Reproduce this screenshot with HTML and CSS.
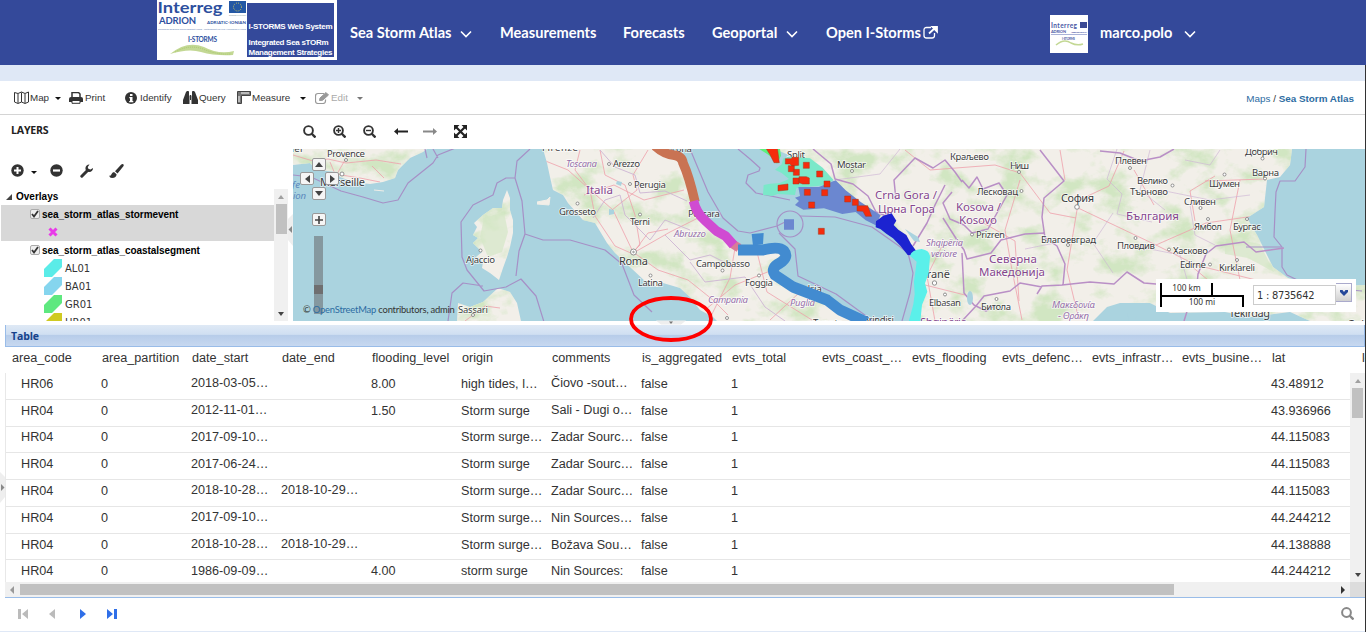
FILE: index.html
```html
<!DOCTYPE html>
<html lang="en">
<head>
<meta charset="utf-8">
<title>Sea Storm Atlas</title>
<link rel="stylesheet" href="styles.css">
</head>
<body>
<header class="topbar">
  <svg class="logo" width="180" height="60" viewBox="0 0 180 60">
    <rect width="180" height="60" fill="#fff"/>
    <rect x="90" y="3" width="87" height="54" fill="#34499a"/>
    <rect x="72" y="1" width="17" height="12" fill="#2458a4"/>
    <circle cx="80.500" cy="7" r="4" fill="none" stroke="#c9c25a" stroke-width="1" stroke-dasharray="1 1.100"/>
    <g fill="#2d4f9e" font-family="Lato, sans-serif">
      <text x="0.500" y="13" font-size="15.500" font-weight="700" textLength="65" lengthAdjust="spacingAndGlyphs">Interreg</text>
      <text x="2" y="24" font-size="9.500" textLength="37">ADRION</text>
      <text x="50" y="24" font-size="4.500" textLength="39">ADRIATIC-IONIAN</text>
      <text x="72" y="15.500" font-size="2" fill="#9aa" textLength="17">EUROPEAN UNION</text>
      <text x="1" y="30" font-size="2.600" fill="#8a9cc4" textLength="88">European Regional Development Fund - Instrument for Pre-Accession II Fund</text>
      <text x="31" y="41.500" font-size="6.500" textLength="29">I-STORMS</text>
    </g>
    <path d="M13 54q17-14 34-7q15 8 30 4l-1 4q-18 1-32-3q-12-4-31 2z" fill="#c3d894"/>
    <path d="M18 52q14-8 28-3q14 6 28 5" fill="none" stroke="#a9c86c" stroke-dasharray="1 1"/>
    <g fill="#fff" font-family="Liberation Sans, sans-serif" font-weight="700" font-size="8">
      <text x="91.500" y="29" textLength="84">I-STORMS Web System</text>
      <text x="91.500" y="44.500" textLength="80">Integrated Sea sTORm</text>
      <text x="91.500" y="54.500" textLength="84">Management Strategies</text>
    </g>
  </svg>
  <nav class="menu">
    <a class="m1">Sea Storm Atlas <svg width="12" height="8"><path d="M1 1.500l5 5 5-5" class="chev"/></svg></a>
    <a class="m2">Measurements</a>
    <a class="m3">Forecasts</a>
    <a class="m4">Geoportal <svg width="12" height="8"><path d="M1 1.500l5 5 5-5" class="chev"/></svg></a>
    <a class="m5">Open I-Storms<svg class="ext" width="15" height="13"><path d="M8 1.500H3.500q-2.500 0-2.500 2.500v5.500q0 2.500 2.500 2.500H9q2.500 0 2.500-2.500V7" fill="none" stroke="#fff" stroke-width="1.300"/><path d="M6 7.500L12.500 1.500M9.500 1H14v4.500z" stroke="#fff" stroke-width="1.800" fill="#fff"/></svg></a>
  </nav>
  <div class="user">
    <svg width="38" height="38"><rect width="38" height="38" fill="#fff"/><g fill="#4a57a4" font-family="Lato, sans-serif"><text x="1" y="13" font-size="6.500" font-weight="700" textLength="26">Interreg</text><text x="1" y="17.500" font-size="4" textLength="15">ADRION</text><text x="21" y="17.500" font-size="2.500" textLength="16">ADRIATIC-IONIAN</text><text x="12" y="25" font-size="3" textLength="13">I-STORMS</text></g><rect x="30" y="7" width="7" height="6" fill="#3b4a94"/><path d="M1 19.500h36" stroke="#aab3d8"/><path d="M6 30q8-7 15-2q6 3 12 1" fill="none" stroke="#c3d894" stroke-width="1.500"/></svg>
    <span class="name">marco.polo</span>
    <svg width="12" height="8"><path d="M1 1.500l5 5 5-5" class="chev"/></svg>
  </div>
</header>
<div class="app">
<div class="band"></div>
<div class="tools">
  <span class="t1"><svg width="15" height="13" fill="none" stroke="#333"><path d="M.500 1.500l3.500 1 3.500-1.500 3.500 1.500 3.500-1.500v10l-3.500 1.500-3.500-1.500-3.500 1.500-3.500-1.500zM4 3v9M7.500 1.500v9.500M11 3v9"/></svg><b>Map</b><i class="dn"></i></span>
  <span class="t2"><svg width="14" height="12"><path d="M3 5V.500h6.500L11 2v3" fill="#fff" stroke="#333" stroke-width="1.500"/><path d="M2 5h10q2 0 2 2v3H0V7q0-2 2-2z" fill="#333"/><path d="M3 8.500h8v2.800H3z" fill="#fff" stroke="#333"/></svg><b>Print</b></span>
  <span class="t3"><svg width="12" height="12"><circle cx="6" cy="6" r="6" fill="#333"/><path d="M5 2h2.500v2H5zM4.300 5h3.200v4h.8v1.300H4.200V9H5V6.300h-.7z" fill="#fff"/></svg><b>Identify</b></span>
  <span class="t4"><svg width="15" height="13" fill="#333"><path d="M3 1h3v3l.500 1v8H0V9zM9 1h3l3 8v4H8.500V5L9 4zM7 4h1v5H7zM3.500 0h2.300v1H3.500zM9.200 0h2.300v1H9.200z"/></svg><b>Query</b></span>
  <span class="t5"><svg width="14" height="13"><path d="M.500.500h13v4H4.500v8h-4z" fill="#777" stroke="#444"/><path d="M5 1v2M7 1v2M9 1v2M11 1v2M1 6h2M1 8h2M1 10h2" stroke="#fff"/></svg><b>Measure</b><i class="dn"></i></span>
  <span class="t6"><svg width="14" height="12" fill="none" stroke="#999"><path d="M9 1.500H3q-2.500 0-2.500 2.500v5Q.500 11.500 3 11.500h5q2.500 0 2.500-2.500V7.500" stroke-width="1.200"/><path d="M4.500 8.500L5 6l6-5.500L13.500 3 7.500 8.300z" fill="#999"/></svg><b>Edit</b><i class="dn"></i></span>
  <span class="crumbs"><a>Maps</a> / <a class="cur">Sea Storm Atlas</a></span>
</div>
<main class="work">
  <aside class="layers">
    <h2>LAYERS</h2>
    <div class="ltools">
      <svg width="13" height="13"><circle cx="6.500" cy="6.500" r="6.200" fill="#333"/><path d="M6.500 3v7M3 6.500h7" stroke="#fff" stroke-width="2"/></svg>
      <i class="dn"></i>
      <svg class="minus" width="13" height="13"><circle cx="6.500" cy="6.500" r="6.200" fill="#333"/><path d="M3 6.500h7" stroke="#fff" stroke-width="2.200"/></svg>
      <svg class="wrench" width="14" height="14"><path d="M1.800 12.200L8 6" stroke="#333" stroke-width="3" stroke-linecap="round"/><path d="M13 4a3.800 3.800 0 1 1-3.500-3.500L7.800 3l.4 2 2.300.5z" fill="#333"/></svg>
      <svg class="brush" width="15" height="14"><path d="M14.300.300q1 1-.3 2.500L8.500 9.500 6 7.300 12 .800q1.400-1.200 2.300-.5zM5 8l2.600 2.300Q7.500 14 3 14 .800 14 0 11.500q1.600.7 2.300-1Q3.200 8 5 8z" fill="#333"/></svg>
    </div>
    <div class="treewrap">
      <div class="tree">
        <div class="node root"><svg width="6" height="6"><path d="M6 0v6H0z" fill="#444"/></svg>Overlays</div>
        <div class="sel">
          <div class="node leaf"><span class="cb"><svg width="8" height="8"><path d="M1 4l2 2.500L7 1" class="tick"/></svg></span>sea_storm_atlas_stormevent</div>
          <div class="symbol"><svg width="10" height="10"><path d="M1.500 1.500l7 7M8.500 1.500l-7 7" stroke="#e83be8" stroke-width="3"/></svg></div>
        </div>
        <div class="node leaf"><span class="cb"><svg width="8" height="8"><path d="M1 4l2 2.500L7 1" class="tick"/></svg></span>sea_storm_atlas_coastalsegment</div>
        <div class="leg"><svg width="18" height="18"><path d="M0 18V10L10 0h8v8L8 18z" fill="#5bece8"/></svg>AL01</div>
        <div class="leg"><svg width="18" height="18"><path d="M0 18V10L10 0h8v8L8 18z" fill="#85d5ee"/></svg>BA01</div>
        <div class="leg"><svg width="18" height="18"><path d="M0 18V10L10 0h8v8L8 18z" fill="#5ee87f"/></svg>GR01</div>
        <div class="leg"><svg width="18" height="18"><path d="M0 18V10L10 0h8v8L8 18z" fill="#cfca22"/></svg>HR01</div>
      </div>
      <div class="vs"><i class="up"></i><div class="thumb"></div><i class="down"></i></div>
    </div>
  </aside>
  <div class="split"><svg width="5" height="32"><path d="M5 0L0 5v21l5 6z" fill="#eee"/><path d="M4 12v7L.500 15.500z" fill="#888"/></svg></div>
  <section class="mapcol">
    <div class="mtools">
      <svg width="13" height="13"><circle cx="5.500" cy="5.500" r="4.400" class="lens"/><path d="M8.500 8.500l4 4" class="hnd"/></svg>
      <svg width="13" height="13"><circle cx="5.500" cy="5.500" r="4.400" class="lens"/><path d="M8.500 8.500l4 4" class="hnd"/><path d="M5.500 3v5M3 5.500h5" stroke="#333" stroke-width="1.400"/></svg>
      <svg width="13" height="13"><circle cx="5.500" cy="5.500" r="4.400" class="lens"/><path d="M8.500 8.500l4 4" class="hnd"/><path d="M3 5.500h5" stroke="#333" stroke-width="1.400"/></svg>
      <svg width="14" height="9"><path d="M2 4.500h12" stroke="#222" stroke-width="2"/><path d="M4 1v7L0 4.500z" fill="#222"/></svg>
      <svg width="14" height="9"><path d="M0 4.500h12" stroke="#888" stroke-width="2"/><path d="M10 1v7l4-3.500z" fill="#888"/></svg>
      <svg width="13" height="13"><path d="M2 2l9 9M11 2l-9 9" stroke="#222" stroke-width="2.200"/><path d="M0 0h5.500L0 5.500zM13 0v5.500L7.500 0zM0 13V7.500L5.500 13zM13 13H7.500L13 7.500z" fill="#222"/></svg>
    </div>
    <div class="map">
      <svg class="canvas" width="1072" height="172" viewBox="293 149 1072 172">
        <defs>
          <filter id="woods" x="0" y="0" width="100%" height="100%" color-interpolation-filters="sRGB"><feTurbulence type="fractalNoise" baseFrequency=".03 .04" numOctaves="5" seed="5"/><feColorMatrix values="0 0 0 0 .82  0 0 0 0 .9  0 0 0 0 .76  4 0 0 0 -1.950"/></filter>
          <clipPath id="land"><path d="M293 149H427L423 152 410 158 398 170 395 178 383 182 370 184 353 182 340 177 337 172 317 170 310 163 293 165zM507 190L510 198V210L513 220V233L510 247 507 257 503 268 499 280 490 273 482 268 483 262 476 257 482 252 473 243 478 238 473 235 477 227 474 223 483 215 493 208 502 208 503 200zM457 321L458 303 470 307 483 302 498 288 510 292 517 303 521 321zM543 149L547 163 550 177 553 190 563 195 568 203 583 220 595 223 607 243 615 253 630 267 647 283 657 287 663 283 680 288 690 297 700 310 713 317 717 321H863L840 310 827 300 793 287 775 275 773 268 787 258 780 248 757 250 735 246 713 228 700 215 694 202 683 165 673 152 660 149zM775 149L800 160 833 180 860 203 877 220 897 230 910 253 920 253 917 273 920 293 913 321H1093L1107 307 1120 303 1150 303 1170 313 1225 312 1250 317 1290 312 1310 321H1365V285L1323 287 1288 278 1273 267 1257 235 1247 218 1264 207 1267 180 1280 177 1290 165 1292 149z"/></clipPath>
        </defs>
        <rect x="293" y="149" width="1072" height="172" fill="#aad3df"/>
        <g clip-path="url(#land)">
          <rect x="293" y="149" width="1072" height="172" fill="#f2efe9"/>
          <rect x="293" y="149" width="1072" height="172" filter="url(#woods)"/>
          <path d="M484 218l20-6 4 20-6 20-14 5-8-20zM1225 246l20-5 15 3 14 28-26-14-23-4z" fill="#d4e7c6" opacity=".7"/>
          <g fill="none" stroke="#efa0ab" stroke-width=".8">
            <path d="M293 155l20 6 15-2 18 4 30-3 25 4M330 162l5 12 25 4 20 4M345 160l-8 14M372 166l12 12M465 321l20-15 15 2M543 160l25 10 20 18 25 22 20 42 25 18 30 10 25 20 15 15M580 150l-5 20 15 20 5 26 20 30 18 8M600 150l5 25 20 10 10 30 5 30-8 8M700 217l-30 15-35 20M735 248l-5 30-20 40M785 265l-50 20-30 25M757 252l10 40 45 28M800 292l-30 28M684 190l-40 10-30-15-30 10M633 253l15-20 20-4M648 150l-15 25 4 15-25 20"/>
            <path d="M905 150l25 20 65-5 25 8 30 40 26 5M1020 180l-15 50 7 40 10 50M1076 207l80 38 50-22 55-8M1205 181l60-2M1077 210l-10 60 12 50M1156 245l40 20 60 15M935 321l-8-45 15-30M1077 201l32-15 15-35M1195 221l-5-30 25-15M1240 180l-10 50 10 50M1134 170l20 35M980 221l35 20 4 60M1060 150l5 30M925 285l40 10M1190 265l30 25"/>
          </g>
          <path d="M900 149l-20 25-45 6M1025 249l50-10M1117 149l-10 30 15 15-5 20 35 8M1150 150l-10 40 25 20M1185 160l25 5 10-15M1160 190l50 10 40-5M1190 205l5 30 20 10M1113 213l-20 30 20 30M1190 290l-10-35-40-8" fill="none" stroke="#cdb4d4" stroke-width=".8" opacity=".8"/>
          <path d="M600 150l15 17 20 8 5 18 25-2 22 10M620 195l5 20 25 25 15-20 25 10M665 235l25 25 20-5 20 10M690 262l15 20 40-5 20 30 20 14M593 218l12-18 15-5" fill="none" stroke="#cdb4d4" stroke-width=".9"/>
        </g>
        <g fill="none" stroke="#a690c6" stroke-width="1.200" stroke-linejoin="round">
          <path d="M293 175l18 2 30 14 22 6 20 6 15-3 10-17 25-20 5-8 25-10M427 158l-2-9M438 158l-5-9M530 149l-13 12-2 17-9 0-9 5-4 12-20 10-12 17 1 35 5 13 17 21 22-4 15-8 15 17 8 26M515 178l7 23 3 33 18 6h27l35 10 17 14 12 31 18 17M525 234l-6 17-3 25M483 286l-20-3-11 10-4 28M690 149l18 43 15 26 15 13 12 2 27-7 8-4M738 149l12 10 10 9-1 3-11 4-2 8 10 10 34 7"/>
          <circle cx="790" cy="224" r="13"/>
          <path d="M779 233l16 16 3 27 38 18 37 27M800 216l35 1 37 10 27 19 9 7 5 20-3 20-8 28M1306 149l-1 18-10 14-15 0-4 11-1 20-1 25 8 10v20l5 8 25 12 50 4M1281 247h-35"/>
        </g>
        <g fill="none" stroke="#b98fc6" stroke-width="1.500" stroke-linejoin="round">
          <path d="M813 149l18 15 4 15 18 5 15 12 8 16 13 5M896 200l-2-20 21-22 18 10 12-8 10 12 7 10M945 185l-10 20-8 18-14 23M962 180l7 8 8-11 6 12 16-6 8 12-10 18-9 16-16 4-8-8-14-6-7-16 9-11M943 218l14 22 7 10 3 9 24-6 10-13 24-6 20-1M962 253l2 40 10 12 12 6 8-5M1040 150l14 18 10 13-20 17-2 19 3 21 12 8 8 18-2 21-21 1-5 8M1062 285l28-3 24 2 13-12 17 11 12 1 22 9 18 3 2-22 8-20 10-8 28-4 12 10 28-4M1100 151l20 2 20 8 20-4 14-8M1042 287l-22-4-10 8-26 5-8 10-14 15M1190 302l-6 19"/>
        </g>
        <g fill="#aad3df"><ellipse cx="970" cy="298" rx="3" ry="7"/><path d="M905 229l13 8 2 5-6-1zM617 181l5 1-1 4-5-2zM609 209l5 1v4l-5 1zM1127 312l10 2-2 7h-6z"/></g>
        <path d="M537 202l10-2 3-3-1 8-12-1M374 190l10 1" stroke="#f1eee8" stroke-width="1" fill="#f1eee8"/>
        <g class="lbl">
          <text x="280" y="152" textLength="24">ellier</text><text x="327" y="157" textLength="38">Provence</text><text x="320" y="186" class="big" textLength="45">Marseille</text><text x="466" y="262.500" textLength="29">Ajaccio</text><text x="458" y="312.500" textLength="30">Sassari</text><text x="542" y="151" textLength="36">Firenze</text><text x="613" y="167" textLength="27">Arezzo</text><text x="634" y="187.500" textLength="32">Perugia</text><text x="559" y="215" textLength="37">Grosseto</text><text x="630" y="224.500" textLength="20">Terni</text><text x="688" y="216.500" textLength="32">Pescara</text><text x="619" y="265" class="big" textLength="29">Roma</text><text x="638" y="285.500" textLength="25">Latina</text><text x="696" y="267" textLength="54">Campobasso</text><text x="745" y="286" textLength="28">Foggia</text><text x="661" y="152" textLength="31">Ancona</text><text x="787" y="158" textLength="18">Split</text><text x="837" y="167.500" textLength="29">Mostar</text><text x="792" y="292" textLength="30">Andria</text><text x="863" y="323" textLength="31">Brindisi</text><text x="813" y="326" textLength="30">Taranto</text>
          <text x="950" y="160" textLength="39">Краљево</text><text x="1010" y="169" textLength="19">Ниш</text><text x="977" y="195" textLength="41">Лесковац</text><text x="976" y="238" textLength="29">Prizren</text><text x="918" y="277.500" class="big" textLength="32">Tiranë</text><text x="929" y="306" textLength="32">Elbasan</text><text x="981" y="309.500" textLength="30">Битола</text><text x="1041" y="242.500" textLength="55">Благоевград</text><text x="1115" y="164" textLength="32">Плевен</text><text x="1137" y="184" textLength="31">Велико</text><text x="1130" y="194.500" textLength="38">Търново</text><text x="1061" y="202" class="big" textLength="33">София</text><text x="1184" y="205" textLength="32">Сливен</text><text x="1209" y="186.500" textLength="31">Шумен</text><text x="1245" y="155" textLength="33">Добрич</text><text x="1252" y="175.500" textLength="27">Варна</text><text x="1194" y="230" textLength="28">Ямбол</text><text x="1233" y="230" textLength="28">Бургас</text><text x="1117" y="249" textLength="38">Пловдив</text><text x="1173" y="253.500" textLength="35">Хасково</text><text x="1180" y="268" textLength="26">Edirne</text><text x="1219" y="271" textLength="36">Kırklareli</text><text x="1229" y="317" class="big" textLength="41">Tekirdağ</text><text x="1347" y="328" class="big">Gebze</text>
          <g class="ctry"><text x="586" y="194" textLength="27">Italia</text><text x="875" y="199" textLength="62">Crna Gora /</text><text x="878" y="213" textLength="57">Црна Гора</text><text x="956" y="211" textLength="45">Kosova /</text><text x="959" y="224" textLength="38">Kosovo</text><text x="989" y="263" textLength="48">Северна</text><text x="979" y="276" textLength="66">Македонија</text><text x="1126" y="219.500" textLength="53">България</text><text x="920" y="326" textLength="47">Shqipëria</text></g>
          <g class="reg"><text x="566" y="167" textLength="31">Toscana</text><text x="674" y="237" textLength="32">Abruzzo</text><text x="708" y="303" textLength="40">Campania</text><text x="790" y="305.500" textLength="25">Puglia</text><text x="926" y="246" textLength="37">Shqipëria</text><text x="931" y="257" textLength="26">veriore</text><text x="1052" y="308" textLength="43">Μακεδονία</text><text x="1058" y="319" textLength="31">- Θράκη</text></g>
          <g class="reg sea"><text x="284" y="187.500" textLength="16">olfe</text><text x="293" y="198.500" textLength="13">ion</text></g>
        </g>
        <g fill="#fff" stroke="#777" stroke-width=".8"><circle cx="346" cy="160" r="1.500"/><circle cx="342" cy="174" r="2"/><circle cx="480.500" cy="250.500" r="1.500"/><circle cx="473" cy="315" r="1.500"/><circle cx="609" cy="164" r="1.500"/><circle cx="630" cy="184" r="1.500"/><circle cx="577.500" cy="203.500" r="1.500"/><circle cx="640" cy="214.500" r="1.500"/><circle cx="633.500" cy="252" r="3"/><circle cx="633.500" cy="252" r=".8"/><circle cx="650.500" cy="275.500" r="1.500"/><circle cx="722.500" cy="270.500" r="1.500"/><circle cx="759" cy="275.500" r="1.500"/><circle cx="727" cy="318" r="1.500"/><circle cx="852" cy="171" r="1.500"/><circle cx="1019" cy="172" r="1.500"/><circle cx="1021.500" cy="191" r="1.500"/><circle cx="972" cy="234.500" r="1.500"/><circle cx="934.500" cy="283" r="2.200"/><circle cx="945" cy="294.500" r="1.500"/><circle cx="996.500" cy="299" r="1.500"/><circle cx="1077" cy="207" r="2.300"/><circle cx="1068" cy="245" r="1.500"/><circle cx="1130" cy="168" r="1.500"/><circle cx="1172.500" cy="185.500" r="1.500"/><circle cx="1224.500" cy="174.500" r="1.500"/><circle cx="1262.500" cy="158.500" r="1.500"/><circle cx="1265" cy="178.500" r="1.500"/><circle cx="1200.500" cy="208" r="1.500"/><circle cx="1208" cy="219" r="1.500"/><circle cx="1247" cy="219" r="1.500"/><circle cx="1135.500" cy="238" r="1.500"/><circle cx="1169" cy="249.500" r="1.500"/><circle cx="1210" cy="264.500" r="1.500"/><circle cx="1237" cy="260" r="1.500"/></g>
        <g fill="none" stroke-linejoin="round">
          <path d="M655 146q9 8 18 9t10 8q6 13 12 39" stroke="#c97353" stroke-width="9.500"/>
          <path d="M731 243l8 5" stroke="#d97b98" stroke-width="9"/>
          <path d="M693.500 201q3 12 11 19l12 11 9 5 8 9" stroke="#d04bd2" stroke-width="9.500"/>
          <path d="M738 250h25q16-4 21 1 5 6-4 12-10 5-5 12l18 12 34 13 13 10 26 12" stroke="#428bd0" stroke-width="11"/>
        </g>
        <g transform="translate(750 140) scale(.33333)">
          <path d="M28 27h62l3 20-12 24-14-18-20-14z" fill="#5cf07c"/>
          <path d="M100 55l20-5 60 5 38 28 32 36-18 16-65 6-20 2-8 2-4 20-52-3-16 6-28-3 2-30 20-4 28-2 28-12-22-18-20-10 20-16z" fill="#7be8c9"/>
          <path d="M145 141l62 0 50-20 30 30 45 35 60 40-15 30-30-15-30-25-40 6-55-17-62 4-25-14 12-12-12-10 15-5zM102 238h30v31h-30z" fill="#6b87d0"/>
          <path d="M5 282l36-3-2 33-30 5z" fill="#428bd0"/>
          <path d="M378 244l22-17 25-7 14 22-8 13 14 14 24 16 14 26 14 20 6 16-30-2-22-28-22-22-20-14-18-14-14-5z" fill="#1c23d0"/>
          <path d="M480 347q5-18 35-20 25 4 25 25l-4 48-11 30 7 25-16 40-5 50h-35l14-52 4-30-2-38 8-60z" fill="#5bf0ea"/>
          <path fill="#f52b0c" stroke="#a5391d" stroke-width="1.500" d="M46 22h36l6 46H72L60 44zM106 56h18l2-4h20v24l-20 2-6-6-14 0zM160 67h18v18h-18zM115 77h18v18h-18zM130 88h18v18h-18zM200 93h18v18h-18zM129 114h18v18h-18zM147 110h22l9 4v18h-20l-11-4zM222 123h18v18h-18zM84 136l30-4v18l-30 3zM163 148h18v18h-18zM215 149h18v18h-18zM176 186h18v18h-18zM284 168h18v18h-18zM307 178h18v18h-18zM321 197h32l12 32h-18l-8-15-18-1zM205 265h18v18h-18z"/>
        </g>
      </svg>
      <div class="pan">
        <span class="p-up"><svg width="8" height="5"><path d="M4 0l4 5H0z"/></svg></span><span class="p-l"><svg width="5" height="8"><path d="M0 4l5-4v8z"/></svg></span><span class="p-r"><svg width="5" height="8"><path d="M5 4L0 0v8z"/></svg></span><span class="p-dn"><svg width="8" height="5"><path d="M4 5L0 0h8z"/></svg></span><span class="p-in"><svg width="8" height="8"><path d="M3.200 0h1.600v3.200H8v1.600H4.800V8H3.200V4.800H0V3.200h3.200z"/></svg></span>
        <div class="zoombar"><div></div></div>
      </div>
      <div class="attr">© <a>OpenStreetMap</a> contributors, admin</div>
      <div class="scale">
        <div class="bars"><div class="km">100 km</div><div class="mi">100 mi</div></div>
        <div class="combo"><span>1 : 8735642</span><em><svg width="8" height="6"><path d="M0 0h2.500L4 2 5.500 0H8v2L4 6 0 2z" fill="#24479a"/></svg></em></div>
      </div>
    </div>
  </section>
</main>
<div class="gap"></div>
<section class="grid">
  <h3>Table</h3>
  <table class="head"><tr><th>area_code<th>area_partition<th>date_start<th>date_end<th>flooding_level<th>origin<th>comments<th>is_aggregated<th>evts_total<th>evts_coast_…<th>evts_flooding<th>evts_defenc…<th>evts_infrastr…<th>evts_busine…<th>lat<th>lon</tr></table>
  <div class="body">
    <div class="rows"><table>
      <tr><td>HR06<td>0<td class="hi">2018-03-05…<td><td>8.00<td>high tides, l…<td class="hi">Čiovo -sout…<td>false<td>1<td><td><td><td><td><td>43.48912</tr>
      <tr><td>HR04<td>0<td class="hi">2012-11-01…<td><td>1.50<td>Storm surge<td class="hi">Sali - Dugi o…<td>false<td>1<td><td><td><td><td><td>43.936966</tr>
      <tr class="s"><td>HR04<td>0<td>2017-09-10…<td><td><td>Storm surge…<td>Zadar Sourc…<td>false<td>1<td><td><td><td><td><td>44.115083</tr>
      <tr><td>HR04<td>0<td>2017-06-24…<td><td><td>Storm surge<td>Zadar Sourc…<td>false<td>1<td><td><td><td><td><td>44.115083</tr>
      <tr><td>HR04<td>0<td class="hi">2018-10-28…<td class="hi">2018-10-29…<td><td>Storm surge…<td>Zadar Sourc…<td>false<td>1<td><td><td><td><td><td>44.115083</tr>
      <tr><td>HR04<td>0<td class="hi">2017-09-10…<td><td><td>Storm surge…<td>Nin Sources…<td>false<td>1<td><td><td><td><td><td>44.244212</tr>
      <tr class="s7"><td>HR04<td>0<td class="hi">2018-10-28…<td class="hi">2018-10-29…<td><td>Storm surge…<td>Božava Sou…<td>false<td>1<td><td><td><td><td><td>44.138888</tr>
      <tr><td>HR04<td>0<td>1986-09-09…<td><td>4.00<td>storm surge<td>Nin Sources:<td>false<td>1<td><td><td><td><td><td>44.244212</tr>
    </table></div>
    <div class="vs"><i class="up"></i><div class="thumb"></div><i class="down"></i></div>
  </div>
  <div class="hs"><i class="left"></i><div class="thumb"></div><i class="right"></i><div class="corner"></div></div>
</section>
<footer class="pager">
  <svg width="10" height="12" fill="#bbb"><path d="M0 1h3v10H0zM10 1v10L4 6z"/></svg>
  <svg width="6" height="12" fill="#bbb"><path d="M6 1v10L0 6z"/></svg>
  <svg width="6" height="12" fill="#2f6fe8"><path d="M0 1v10l6-5z"/></svg>
  <svg width="10" height="12" fill="#2f6fe8"><path d="M0 1v10l6-5zM7 1h3v10H7z"/></svg>
  <svg class="find" width="13" height="13"><circle cx="5.500" cy="5.500" r="4.400" fill="none" stroke="#888" stroke-width="2"/><path d="M8.500 8.500l4 4" stroke="#888" stroke-width="2.400"/></svg>
</footer>
</div>
<svg class="tab" width="5" height="32"><path d="M0 0l5 5v20l-5 6z" fill="#eee"/><path d="M1 12v7l3.500-3.500z" fill="#888"/></svg>
<svg class="mark" width="86" height="48"><path d="M28 25.500h30l-5 4H33z" fill="#eee"/><path d="M41 26.500h4l-2 2.500z" fill="#777"/><ellipse cx="43" cy="24" rx="40" ry="21" fill="none" stroke="#f00" stroke-width="3.800"/></svg>
</body>
</html>
```

FILE: styles.css
```css
* { box-sizing: border-box; }
body { margin: 0; width: 1366px; height: 632px; overflow: hidden; position: relative; background: #fff; color: #333; font-family: "Liberation Sans", Arial, sans-serif; }
svg { display: block; flex: none; }
i { font-style: normal; }
.topbar { height: 65px; background: #34499a; display: flex; padding-left: 157px; color: #fff; font: 700 14.6px/20px Lato, sans-serif; }
.menu { display: flex; padding: 23px 0 0 13px; width: 713px; height: 50px; }
.menu a { display: flex; align-items: center; white-space: nowrap; height: 20px; flex: none; }
.menu a svg { margin: 1px 0 0 9px; }
.menu a .ext { margin: -2px 0 0 2px; }
.m1 { width: 150px; }
.m2 { width: 123px; }
.m3 { width: 89px; }
.m4 { width: 114px; }
.chev { fill: none; stroke: #fff; stroke-width: 1.6; }
.user { display: flex; padding-top: 15px; }
.name { margin: 8px 11px 0 12px; width: 73px; }
.user svg:last-child { margin-top: 15px; }
.app { border-right: 1px solid #333; height: 567px; display: flex; flex-direction: column; }
.band { height: 16px; background: #dfe8f6; flex: none; }
.tools { height: 34px; border-bottom: 1px solid #d4d4d4; display: flex; flex: none; align-items: center; padding-left: 14px; font-size: 9.8px; }
.tools b { font-weight: 400; margin-left: 1px; }
.tools > span { display: flex; align-items: center; flex: none; }
.dn { border: 3px solid transparent; border-top: 3px solid #111; border-bottom: 0; height: 0; width: 0; }
.tools .dn { margin: 2px 0 0 6px; }
.t1 { width: 55px; } .t2 { width: 56px; } .t2 b { margin-left: 2px; }
.t3 { width: 58px; } .tools .t3 b { margin-left: 3px; }
.t4 { width: 54px; } .t5 { width: 78px; } .tools .t5 .dn { margin-left: 10px; }
.t6 { width: 60px; color: #aaa; } .tools .t6 b { margin-left: 2px; } .tools .t6 .dn { border-top-color: #777; margin-left: 9px; }
.tools .crumbs { margin-left: auto; padding: 1px 11px 0 0; display: block; font-size: 9.9px; }
.crumbs a { color: #2d6ca2; }
.crumbs .cur { font-weight: 700; }
.work { height: 206px; flex: none; display: flex; }
.layers { width: 288px; height: 206px; display: flex; flex-direction: column; }
.layers h2 { margin: 0; padding: 7px 0 0 11px; font: 700 10.6px/16px "Open Sans", sans-serif; letter-spacing: -.2px; color: #222; height: 49px; }
.ltools { display: flex; padding-left: 11px; height: 25px; align-items: flex-start; }
.ltools .dn { margin: 7px 0 0 7px; }
.ltools .minus { margin-left: 13px; }
.ltools .wrench { margin-left: 17px; }
.ltools .brush { margin-left: 15px; }
.treewrap { display: flex; height: 132px; }
.tree { width: 273px; margin-left: 1px; height: 132px; overflow: hidden; color: #000; font: 700 10px/18px "Liberation Sans", sans-serif; }
.node { height: 18px; display: flex; align-items: center; }
.root { height: 16px; padding-left: 5px; }
.root svg { margin-right: 4px; }
.leaf { padding: 2px 0 0 29px; letter-spacing: -.06px; }
.sel { background: #d8d8d8; height: 36px; }
.symbol { padding: 4px 0 0 47px; }
.cb { width: 10px; height: 10px; border: 1px solid #aaa; border-radius: 2px; background: #eee; margin: -2px 2px 0 0; }
.tick { fill: none; stroke: #333; stroke-width: 1.8; }
.leg { display: flex; padding-left: 43px; height: 18px; font: 400 10px/20px "DejaVu Sans", sans-serif; color: #333; }
.leg svg { margin-right: 3px; }
.vs { display: flex; flex-direction: column; align-items: center; background: #f0f0f0; width: 14px; }
.vs .up { border: 3.5px solid transparent; border-bottom: 4px solid #a0a0a0; border-top: 0; margin: 6px 0 5px; }
.vs .down { border: 3.5px solid transparent; border-top: 4px solid #444; border-bottom: 0; margin: auto 0 5px; }
.vs .thumb { width: 11px; height: 30px; background: #c1c1c1; }
.split { width: 5px; padding-top: 99px; }
.mapcol { width: 1072px; }
.mtools { display: flex; height: 34px; padding: 1px 0 3px 10px; align-items: center; gap: 17px; }
.mtools svg:nth-child(4) { margin-left: 1px; }
.mtools svg:nth-child(5) { margin-left: -2px; }
.mtools svg:nth-child(6) { margin-left: 0; }
.lens { fill: none; stroke: #333; stroke-width: 1.9; }
.hnd { stroke: #333; stroke-width: 2.4; }
.map { position: relative; height: 172px; overflow: hidden; }
.lbl { font: 9.6px "Noto Sans", sans-serif; fill: #3c3c40; stroke: #fff; stroke-opacity: .7; stroke-width: 1.6px; paint-order: stroke; }
.big { font-size: 11px; }
.ctry { font-size: 11.5px; fill: #85468e; }
.reg { font-size: 9.6px; font-style: italic; fill: #9670aa; }
.sea { fill: #5b88bd; stroke: none; }
.pan span { position: absolute; width: 14px; height: 13px; background: #f5f5f5; border: 1px solid #999; border-radius: 2px; display: flex; align-items: center; justify-content: center; }
.pan path { fill: #444; }
.pan .p-up { left: 19px; top: 9px; }
.pan .p-l { left: 7px; top: 23px; }
.pan .p-r { left: 32px; top: 23px; }
.pan .p-dn { left: 19px; top: 38px; }
.pan .p-in { left: 19px; top: 64px; }
.zoombar { position: absolute; left: 21px; top: 87px; width: 9px; height: 78px; background: #85989f; padding-top: 49px; }
.zoombar div { height: 9px; background: #6f6f70; }
.attr { position: absolute; left: 10px; bottom: 4px; font: 9.4px/14px Lato, sans-serif; letter-spacing: -.2px; color: #333; white-space: nowrap; }
.attr a { color: #2d6ca2; }
.scale { position: absolute; left: 863px; top: 130px; width: 200px; height: 33px; background: #fff; padding: 4px; display: flex; font: 8.3px/10px "Noto Sans", sans-serif; }
.bars { width: 84px; margin-right: 9px; text-align: center; }
.km { width: 53px; height: 12px; border: 2px solid #000; border-width: 0 2px 0 2px; }
.mi { width: 84px; height: 12px; border: 2px solid #000; border-bottom: 0; line-height: 9px; }
.combo { display: flex; width: 99px; height: 21px; margin-top: 2px; }
.combo span { border: 1px solid #ccc; width: 83px; height: 20px; padding-left: 3px; font: 11px/19px "DejaVu Sans Condensed", "DejaVu Sans", sans-serif; font-stretch: condensed; letter-spacing: -.25px; white-space: nowrap; }
.combo em { width: 16px; height: 19px; margin-top: -2px; background: linear-gradient(#fff, #d0d0d0); border: 1px solid #aac; border-left: 0; display: flex; align-items: center; justify-content: center; }
.gap { height: 4px; flex: none; }
.grid { margin-left: 5px; width: 1360px; flex: none; height: 273px; border-bottom: 1px solid #99bce8; overflow: hidden; }
.grid h3 { margin: 0; height: 22px; padding-left: 5px; font: 700 10.5px/22px "Open Sans", sans-serif; letter-spacing: -.1px; color: #15428b; border: 1px solid #99bce8; border-top: 0; background: linear-gradient(#dfe9f5, #cfdff2 45%, #b6cce9 47%, #c7d8f0); }
table { border-collapse: separate; border-spacing: 0; table-layout: fixed; width: 1440px; font-size: 12.65px; }
th, td { width: 90px; padding: 0; text-align: left; font-weight: 400; white-space: nowrap; vertical-align: top; }
.head { height: 26px; margin-left: 7px; }
.head th { line-height: 15px; padding-top: 4px; }
.body { display: flex; height: 209px; }
.rows { width: 1345px; overflow: hidden; border-left: 1px solid #e8e8e8; }
.rows td { height: 27px; border-bottom: 1px solid #e6e6e6; line-height: 15px; padding: 4px 0 0 5px; }
.rows table { width: 1350px; }
.rows td:first-child { padding-left: 15px; }
.rows .s td { height: 26px; padding-top: 3px; }
.rows .s7 td { height: 26px; }
.rows td.hi { padding-top: 3px; }
.body .vs { width: 15px; padding-left: 0; }
.hs { display: flex; height: 15px; background: #f0f0f0; align-items: center; }
.hs .left { border: 4px solid transparent; border-right: 4px solid #999; border-left: 0; margin: 0 6px 0 5px; }
.hs .thumb { width: 1154px; height: 11px; background: #c1c1c1; }
.hs .right { border: 4px solid transparent; border-left: 4px solid #333; border-right: 0; margin: 0 5px 0 auto; }
.hs .corner { width: 15px; height: 15px; background: #dcdcdc; }
.pager { height: 34px; border-bottom: 1px solid #dfe8f6; display: flex; align-items: center; padding: 0 11px 2px 18px; }
.pager svg { margin-right: 21px; }
.pager svg:nth-child(2) { margin-right: 25px; }
.pager .find { margin: 0 0 0 auto; }
.tab { position: absolute; left: 0; top: 472px; }
.mark { position: absolute; left: 628px; top: 295px; }
```
